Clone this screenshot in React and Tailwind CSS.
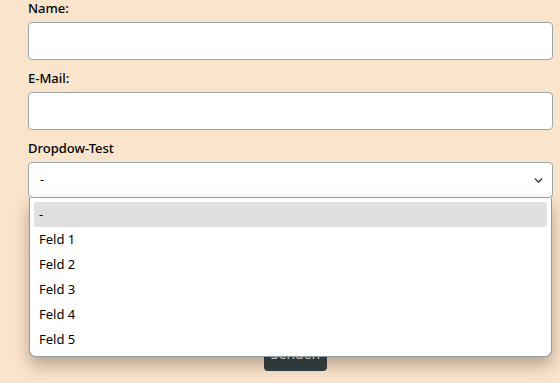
import { ChevronDown } from 'lucide-react';

const OPTIONS = ['-', 'Feld 1', 'Feld 2', 'Feld 3', 'Feld 4', 'Feld 5'];

function Field({ label, children }) {
  return (
    <div className="flex flex-col">
      <label className="text-[13px] leading-[16px] font-medium text-black mb-[6px]">{label}</label>
      {children}
    </div>
  );
}

export default function App() {
  return (
    <div
      className="w-[560px] h-[383px] overflow-hidden bg-[#fbe4cc] text-black"
      style={{ fontFamily: '"Noto Sans", "DejaVu Sans", sans-serif' }}
    >
      <form className="relative mx-[28px] w-[525px] flex flex-col gap-[10px]">
        <Field label="Name:">
          <input className="h-[38px] w-full rounded-[4px] border border-[#9ba5ad] bg-white" />
        </Field>
        <Field label="E-Mail:">
          <input className="h-[38px] w-full rounded-[4px] border border-[#9ba5ad] bg-white" />
        </Field>
        <Field label="Dropdow-Test">
          <div className="relative">
            <div className="flex h-[36px] w-full items-center justify-between rounded-[4px] border border-[#9ba5ad] bg-white pl-[11px] pr-[7px] text-[13px]">
              <span>-</span>
              <ChevronDown size={13} strokeWidth={2.5} className="text-[#222]" />
            </div>
            {/* open native dropdown list */}
            <div className="absolute left-[1px] right-[1px] top-[36px] z-10 rounded-b-[7px] border-x border-b border-[#8e9aa4] bg-white px-[4px] pt-[4px] pb-[4px] shadow-[0_8px_16px_rgba(60,40,20,0.35)]">
              {OPTIONS.map((o, i) => (
                <div
                  key={o}
                  className={`flex h-[25px] items-center px-[5px] text-[13px] ${
                    i === 0 ? 'rounded-[3px] bg-[#e0e0e0]' : ''
                  }`}
                >
                  {o}
                </div>
              ))}
            </div>
          </div>
        </Field>
        <div className="flex justify-center pt-[127px]">
          <button
            type="button"
            className="ml-[10px] h-[36px] rounded-[4px] bg-[#2d3d44] px-[7px] text-[14px] text-white"
          >
            Senden
          </button>
        </div>
      </form>
    </div>
  );
}
